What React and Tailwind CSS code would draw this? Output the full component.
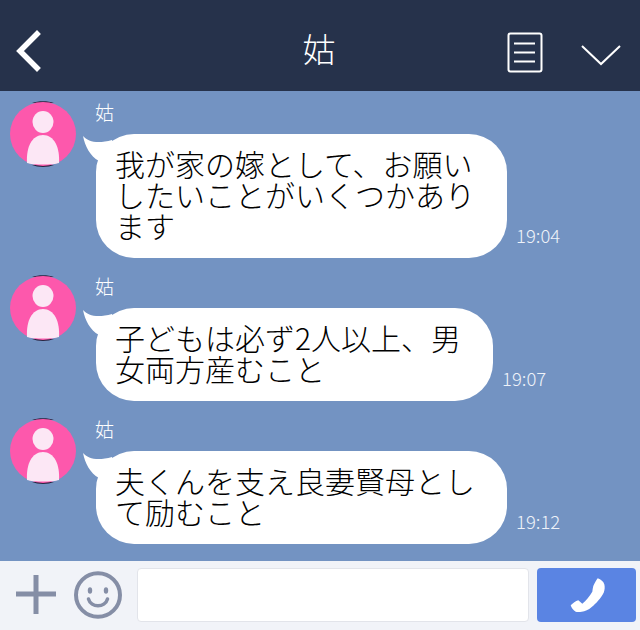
import React from 'react';

const messages = [
  { id: 1, lines: ['我が家の嫁として、お願い', 'したいことがいくつかあり', 'ます'], time: '19:04', width: 'w-[411px]' },
  { id: 2, lines: ['子どもは必ず2人以上、男', '女両方産むこと'], time: '19:07', width: 'w-[397px]' },
  { id: 3, lines: ['夫くんを支え良妻賢母とし', 'て励むこと'], time: '19:12', width: 'w-[411px]' },
];

function Avatar() {
  return (
    <svg width="66" height="66" viewBox="0 0 66 66" className="shrink-0">
      <path d="M22 2 C28 -0.5 38 -0.5 44 2 Z M22 64 C28 66.5 38 66.5 44 64 Z" fill="#2a2440" />
      <ellipse cx="33" cy="33" rx="33" ry="32" fill="#fd58ac" />
      <ellipse cx="33" cy="21" rx="10.5" ry="11" fill="#fce7f5" />
      <path d="M17 62 C16 46 22 34 33 34 C44 34 50 46 49 62 C43 64 23 64 17 62 Z" fill="#fce7f5" />
    </svg>
  );
}

function Message({ lines, time, width }) {
  return (
    <div className="flex">
      <Avatar />
      <div className="ml-5 flex flex-col">
        <div className="-ml-[1px] -mt-[1px] h-[34px] text-[19px] leading-[24px] font-extralight text-white">姑</div>
        <div className="flex items-end">
          <div className={`relative ${width} rounded-[38px] bg-white pl-[19px] pt-[14px] pb-[17px] text-[30px] leading-[31px] font-extralight text-black`}>
            <svg width="34" height="28" viewBox="0 0 34 28" className="absolute left-[-14px] top-[2px]">
              <path d="M1 0 C6 6 16 8 30 4 L30 26 L17 25 C8 20 3 10 1 0 Z" fill="#fff" />
            </svg>
            {lines.map(line => (
              <span key={line} className="relative block whitespace-nowrap">{line}</span>
            ))}
          </div>
          <span className="mb-[11px] ml-[9px] text-[18.5px] leading-[24px] font-extralight text-[#eef2f9]">{time}</span>
        </div>
      </div>
    </div>
  );
}

export default function App() {
  return (
    <div className="flex h-[630px] w-[640px] flex-col overflow-hidden font-['Noto_Sans_CJK_JP','Noto_Sans',sans-serif]">
      <header className="relative flex h-[91px] shrink-0 items-center justify-between bg-[#26324b] pl-[14px] pr-[19px] pt-[10px] text-white">
        <svg width="28" height="42" viewBox="0 0 28 42" fill="none" stroke="#fff" strokeWidth="5.5" strokeLinecap="square">
          <path d="M23 4 L6 21 L23 38" />
        </svg>
        <div className="absolute left-0 right-0 top-[27px] -ml-[2px] text-center text-[33px] leading-[42px] font-extralight">姑</div>
        <div className="mt-[4px] flex items-center gap-[38px]">
          <svg width="36" height="41" viewBox="0 0 36 41" fill="none" stroke="#fff" strokeWidth="2" className="-ml-[1px]">
            <rect x="1.5" y="1.5" width="33" height="38" rx="2" />
            <path d="M7 11.5 H28 M7 20.5 H28 M7 29.5 H28" />
          </svg>
          <svg width="40" height="22" viewBox="0 0 40 22" fill="none" stroke="#fff" strokeWidth="2" className="mt-[4px]">
            <path d="M1 2 L20 20 L39 2" />
          </svg>
        </div>
      </header>

      <main className="flex flex-1 flex-col gap-[17px] bg-[#7393c2] pl-[10px] pt-[10px]">
        {messages.map(m => (
          <Message key={m.id} lines={m.lines} time={m.time} width={m.width} />
        ))}
      </main>

      <footer className="flex h-[69px] shrink-0 items-center bg-[#f1f3f8] pl-[13px] pr-[4px]">
        <svg width="46" height="46" viewBox="0 0 46 46" fill="#858ea6" className="-mt-[2px] shrink-0">
          <rect x="20.5" y="3" width="5" height="39" />
          <rect x="3" y="19.5" width="40" height="5" />
        </svg>
        <svg width="50" height="50" viewBox="0 0 50 50" fill="none" className="-mt-[2px] ml-[15px] shrink-0" stroke="#858ea6">
          <ellipse cx="24" cy="25" rx="22" ry="21.8" strokeWidth="4" />
          <ellipse cx="16" cy="20.5" rx="2.2" ry="3.2" fill="#858ea6" stroke="none" />
          <ellipse cx="32" cy="20.5" rx="2.2" ry="3.2" fill="#858ea6" stroke="none" />
          <path d="M14.5 29 C17 38 31 38 33.5 29" strokeWidth="3.5" strokeLinecap="round" />
        </svg>
        <div className="-mt-[2px] ml-[13px] h-[54px] w-[392px] rounded-[4px] border border-[#e2e4ea] bg-white" />
        <div className="-mt-[2px] ml-[8px] flex h-[54px] w-[99px] items-center justify-center rounded-[4px] bg-[#5a84e3]">
          <svg width="36" height="36" viewBox="0 0 36 36" fill="#fff" className="ml-[3px]">
            <path d="M27.7 1.3 C31 2.5 33.5 4.5 34.3 7.3 C35 10 34.8 13 33.7 15.7 C31 21 26 26.5 21.7 30 C18.5 32.8 15 34.5 11.7 34.7 C9.5 35 7 35 5.7 34.7 C3.5 33.5 1.5 31 0.7 28.3 C3 26 5.5 24.2 8.3 23.3 C9.8 24.3 11 25.5 12.3 26.7 C16 23.5 19.8 19 22.3 14.7 C22.6 12.5 22.8 10.8 23.3 9 C24.5 6.2 26 3.5 27.7 1.3 Z" />
          </svg>
        </div>
      </footer>
    </div>
  );
}
